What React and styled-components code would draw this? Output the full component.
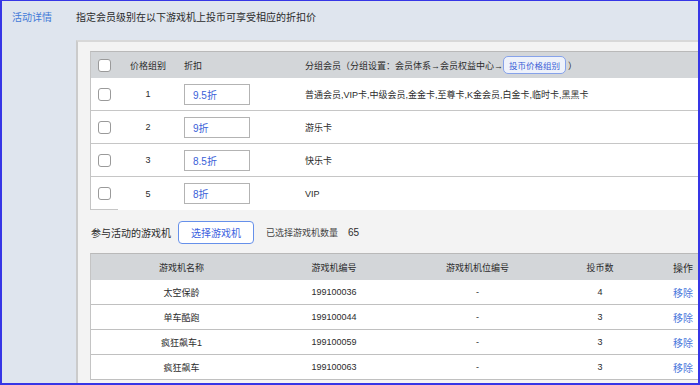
import styled, { createGlobalStyle } from 'styled-components'

const GlobalStyle = createGlobalStyle`
  body {
    margin: 0;
    font-family: "Liberation Sans", "Noto Sans CJK SC", sans-serif;
    color: #2b2b2b;
  }
`

const Frame = styled.div`
  box-sizing: border-box;
  width: 700px;
  height: 385px;
  display: flex;
  overflow: hidden;
  background: #dfe5ee;
  border: 2px solid #3636e6;
  border-top-width: 1px;
`

const SideLabel = styled.div`
  flex: none;
  width: 64px;
  padding: 11px 0 0 10px;
  font-size: 10px;
  line-height: 12px;
  color: #3f7ad8;
`

const Main = styled.div`
  flex: 1;
  min-width: 0;
  display: flex;
  flex-direction: column;
`

const Intro = styled.div`
  padding-top: 11px;
  margin-bottom: 16px;
  font-size: 10px;
  line-height: 12px;
  color: #2b2b2b;
`

const Panel = styled.section`
  flex: 1;
  width: 660px;
  background: #f3f3f3;
  border-left: 2px solid #cbcbcb;
  border-top: 2px solid #d8d8d8;
  padding: 9px 0 0 12px;
`

const Table = styled.div`
  background: #fff;
  border-top: 1px solid #b9b9b9;
  border-left: 1px solid #c4c4c4;
  font-size: 9px;
`

const GroupRow = styled.div`
  box-sizing: border-box;
  display: grid;
  grid-template-columns: 27px 60px 121px 1fr;
  height: ${p => (p.$head ? 26 : 33)}px;
  background: ${p => (p.$head ? '#d3d6d9' : '#fff')};
  border-bottom: ${p => (p.$head || p.$last ? 'none' : '1px solid #c6c6c6')};
`

const Cell = styled.div`
  display: flex;
  align-items: center;
  justify-content: ${p => (p.$center ? 'center' : 'flex-start')};
  padding-left: ${p => p.$pad || 0}px;
  white-space: nowrap;
  border-bottom: ${p => (p.$edge ? '1px solid #c6c6c6' : 'none')};
`

const Check = styled.span`
  box-sizing: border-box;
  width: 13px;
  height: 13px;
  border: 1px solid #9a9a9a;
  border-radius: 3px;
  background: #fff;
`

const Discount = styled.div`
  box-sizing: border-box;
  width: 66px;
  height: 21px;
  display: flex;
  align-items: center;
  padding-left: 8px;
  border: 1px solid #b3b3b3;
  background: #fff;
  color: #3a5fd8;
  font-size: 10px;
`

const TagButton = styled.span`
  box-sizing: border-box;
  display: inline-flex;
  align-items: center;
  height: 18px;
  padding: 0 5px;
  margin: 0 2px 0 0;
  border: 1px solid #86a2ea;
  border-radius: 5px;
  background: #eef2fb;
  color: #3c5fd6;
  font-size: 8.5px;
`

const GameBar = styled.div`
  display: flex;
  align-items: center;
  height: 43px;
  padding: 1px 0 0 1px;
  box-sizing: border-box;
  font-size: 10px;
`

const PickButton = styled.button`
  box-sizing: border-box;
  height: 23px;
  width: 76px;
  margin: 0 12px 0 7px;
  border: 1px solid #6690ea;
  border-radius: 4px;
  background: #fff;
  color: #3c5fe0;
  font-family: inherit;
  font-size: 10px;
  padding: 0;
`

const Count = styled.span`
  color: #444;
  font-size: 9px;
  margin-right: 10px;
`

const GameRow = styled.div`
  box-sizing: border-box;
  display: grid;
  grid-template-columns: 181px 124px 163px 82px 84px;
  height: ${p => (p.$head ? 26 : 25)}px;
  background: ${p => (p.$head ? '#d3d6d9' : '#fff')};
  border-bottom: ${p => (p.$head ? 'none' : '1px solid #c0c0c0')};
`

const GameCell = styled.div`
  display: flex;
  align-items: center;
  justify-content: center;
  white-space: nowrap;
  font-size: ${p => (p.$big ? 10 : 9)}px;
`

const RemoveLink = styled.a`
  color: #4a78dc;
  text-decoration: none;
  font-size: 10px;
`

const groups = [
  { id: 1, rate: '9.5折', members: '普通会员,VIP卡,中级会员,金金卡,至尊卡,K金会员,白金卡,临时卡,黑黑卡' },
  { id: 2, rate: '9折', members: '游乐卡' },
  { id: 3, rate: '8.5折', members: '快乐卡' },
  { id: 5, rate: '8折', members: 'VIP' },
]

const games = [
  { name: '太空保龄', code: '199100036', seat: '-', coins: 4 },
  { name: '单车酷跑', code: '199100044', seat: '-', coins: 3 },
  { name: '疯狂飙车1', code: '199100059', seat: '-', coins: 3 },
  { name: '疯狂飙车', code: '199100063', seat: '-', coins: 3 },
]

const App = () => {
  return (
    <Frame>
      <GlobalStyle />
      <SideLabel>活动详情</SideLabel>
      <Main>
        <Intro>指定会员级别在以下游戏机上投币可享受相应的折扣价</Intro>
        <Panel>
          <Table>
            <GroupRow $head>
              <Cell $center><Check /></Cell>
              <Cell $center>价格组别</Cell>
              <Cell $pad={6}>折扣</Cell>
              <Cell $pad={6}>
                分组会员（分组设置：会员体系→会员权益中心→
                <TagButton>投币价格组别</TagButton>）
              </Cell>
            </GroupRow>
            {groups.map((g, i) => {
              const last = i === groups.length - 1
              return (
                <GroupRow key={g.id} $last={last}>
                  <Cell $center $edge={last}><Check /></Cell>
                  <Cell $center>{g.id}</Cell>
                  <Cell $pad={6}><Discount>{g.rate}</Discount></Cell>
                  <Cell $pad={6}>{g.members}</Cell>
                </GroupRow>
              )
            })}
          </Table>

          <GameBar>
            参与活动的游戏机
            <PickButton>选择游戏机</PickButton>
            <Count>已选择游戏机数量</Count>
            65
          </GameBar>

          <Table>
            <GameRow $head>
              <GameCell>游戏机名称</GameCell>
              <GameCell>游戏机编号</GameCell>
              <GameCell>游戏机机位编号</GameCell>
              <GameCell>投币数</GameCell>
              <GameCell $big>操作</GameCell>
            </GameRow>
            {games.map(g => (
              <GameRow key={g.code}>
                <GameCell>{g.name}</GameCell>
                <GameCell>{g.code}</GameCell>
                <GameCell>{g.seat}</GameCell>
                <GameCell>{g.coins}</GameCell>
                <GameCell><RemoveLink href="#">移除</RemoveLink></GameCell>
              </GameRow>
            ))}
          </Table>
        </Panel>
      </Main>
    </Frame>
  )
}

export default App
